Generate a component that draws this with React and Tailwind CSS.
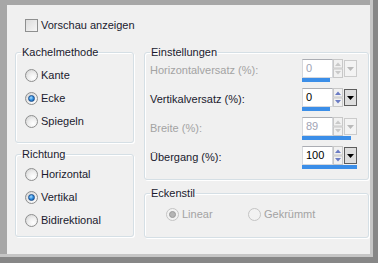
import React from 'react';

const font = "font-['Liberation_Sans',Arial,sans-serif]";

const Radio = ({ checked, disabled }) => (
  <span
    className={`flex h-[13px] w-[13px] shrink-0 items-center justify-center rounded-full border ${
      disabled
        ? 'border-[#c4c4c4] bg-[#f2f2f2]'
        : 'border-[#8e8f8f] bg-[radial-gradient(circle_at_65%_70%,#ffffff_0%,#eeeeee_45%,#cdcdcd_100%)]'
    }`}
  >
    {checked && (
      <span
        className={`h-[7px] w-[7px] rounded-full border ${
          disabled
            ? 'border-[#9a9a9a] bg-[#b4b4b4]'
            : 'border-[#1d4f8c] bg-[radial-gradient(circle_at_40%_35%,#a8dcff_0%,#2f8ee0_50%,#0f4e9a_100%)]'
        }`}
      />
    )}
  </span>
);

const Option = ({ label, checked, disabled }) => (
  <label className="flex h-[23px] items-center gap-[3px]">
    <Radio checked={checked} disabled={disabled} />
    <span className={disabled ? 'text-[#a3a3a3]' : 'text-[#1a1a2e]'}>{label}</span>
  </label>
);

// fieldset + legend gives the etched Windows group box
const Group = ({ title, className, children }) => (
  <fieldset
    className={`rounded-[3px] border border-[#d5dfe5] shadow-[inset_1px_1px_0_#fff,1px_1px_0_#fff] ${className}`}
  >
    <legend className="ml-[5px] px-[1px] leading-[13px] text-[#1a1a2e]">{title}</legend>
    {children}
  </fieldset>
);

const Spin = ({ disabled }) => {
  const c = disabled ? '#c9c9c9' : '#6b7cc4';
  return (
    <svg width="10" height="19" viewBox="0 0 10 19" className="shrink-0">
      <rect x="0.5" y="0.5" width="9" height="8.5" fill="#f1f1f1" stroke="#c8c8c8" />
      <rect x="0.5" y="10" width="9" height="8.5" fill="#f1f1f1" stroke="#c8c8c8" />
      <path d="M2 7 L5 3.5 L8 7 Z" fill={c} />
      <path d="M2 12 L5 15.5 L8 12 Z" fill={c} />
    </svg>
  );
};

const Drop = ({ disabled }) => (
  <svg width="13" height="17" viewBox="0 0 13 17" className="ml-[1px] shrink-0">
    <rect
      x="0.5"
      y="0.5"
      width="12"
      height="16"
      fill={disabled ? '#f3f3f3' : '#dedede'}
      stroke={disabled ? '#cbcbcb' : '#5d5d5d'}
    />
    <path d="M3 7 L10 7 L6.5 11 Z" fill={disabled ? '#b9b9b9' : '#000'} />
  </svg>
);

const Field = ({ value, fill, disabled }) => (
  <div className="flex w-[55px] flex-col">
    <div className="flex h-[19px] items-center">
      <div
        className={`flex h-[19px] w-[31px] items-center border border-[#d6d8dc] border-t-[#abadb3] bg-white pl-[3px] ${
          disabled ? 'text-[#a0a3b4]' : 'text-black'
        }`}
      >
        {value}
      </div>
      <Spin disabled={disabled} />
      <Drop disabled={disabled} />
    </div>
    <div className="h-[4px]">
      <div className="h-full bg-[#3b8ee8]" style={{ width: `${fill}px` }} />
    </div>
  </div>
);

const SettingRow = ({ label, value, fill, disabled }) => (
  <div className="flex h-[23px] items-center justify-between">
    <span className={disabled ? 'text-[#a3a3a3]' : 'text-[#1a1a2e]'}>{label}</span>
    <Field value={value} fill={fill} disabled={disabled} />
  </div>
);

export default function App() {
  return (
    <div className={`flex h-[263px] w-[378px] flex-col bg-[#878787] pb-[6px] pr-[5px] text-[11px] ${font}`}>
      <div className="flex flex-1 border-b-[3px] border-r-[3px] border-[#c6c6c6] bg-[#a7a7a7] pl-[7px] pt-[5px]">
        <div className="flex flex-1 flex-col bg-[#f0f0f0] pl-[8px] pr-[1px]">
          <label className="ml-[10px] mt-[12px] flex h-[16px] items-center gap-[3px]">
            <span className="h-[13px] w-[13px] border border-[#8e8f8f] bg-[linear-gradient(135deg,#dcdcdc,#f6f6f6)]" />
            <span className="text-[#1a1a2e]">Vorschau anzeigen</span>
          </label>

          <div className="mt-[13px] flex gap-[10px]">
            <div className="flex w-[119px] flex-col gap-[5px]">
              <Group title="Kachelmethode" className="h-[97px]">
                <div className="pl-[9px] pt-[5px]">
                  <Option label="Kante" />
                  <Option label="Ecke" checked />
                  <Option label="Spiegeln" />
                </div>
              </Group>
              <Group title="Richtung" className="h-[89px]">
                <div className="pl-[9px] pt-[2px]">
                  <Option label="Horizontal" />
                  <Option label="Vertikal" checked />
                  <Option label="Bidirektional" />
                </div>
              </Group>
            </div>

            <div className="flex w-[225px] flex-col gap-[7px]">
              <Group title="Einstellungen" className="h-[134px]">
                <div className="flex flex-col gap-[6px] pl-[5px] pr-[11px]">
                  <SettingRow label="Horizontalversatz (%):" value="0" fill={28} disabled />
                  <SettingRow label="Vertikalversatz (%):" value="0" fill={28} />
                  <SettingRow label="Breite (%):" value="89" fill={49} disabled />
                  <SettingRow label="Übergang (%):" value="100" fill={55} />
                </div>
              </Group>
              <Group title="Eckenstil" className="h-[51px]">
                <div className="flex items-center pl-[21px] pt-[3px]">
                  <div className="w-[82px]">
                    <Option label="Linear" checked disabled />
                  </div>
                  <Option label="Gekrümmt" disabled />
                </div>
              </Group>
            </div>
          </div>
        </div>
      </div>
    </div>
  );
}
